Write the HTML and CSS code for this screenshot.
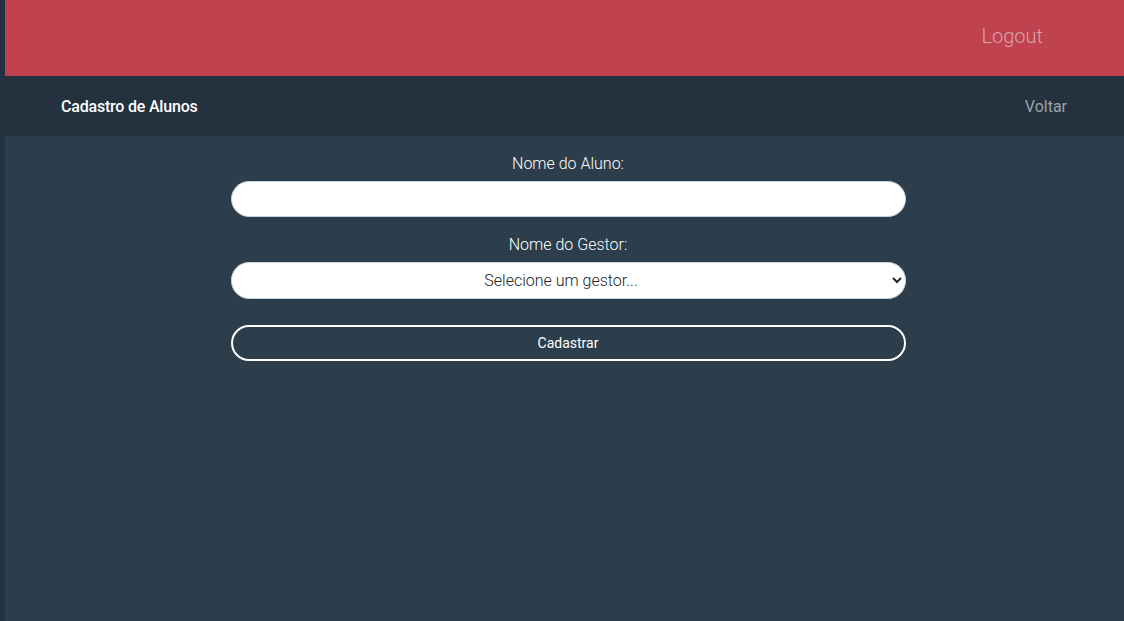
FILE: index.html
```html
<!DOCTYPE html>
<html lang="pt-BR">
<head>
<meta charset="utf-8">
<title>Cadastro de Alunos</title>
<link rel="stylesheet" href="styles.css">
</head>
<body>
<header class="topbar">
  <a class="logout" href="#">Logout</a>
</header>
<nav class="navbar">
  <span class="brand">Cadastro de Alunos</span>
  <a class="back" href="#">Voltar</a>
</nav>
<main class="content">
  <form class="form">
    <label class="label" for="aluno">Nome do Aluno:</label>
    <input class="field" id="aluno" type="text">
    <label class="label" for="gestor">Nome do Gestor:</label>
    <select class="field select" id="gestor">
      <option>Selecione um gestor...</option>
    </select>
    <button class="btn" type="button">Cadastrar</button>
  </form>
</main>
</body>
</html>
```
FILE: styles.css
```css
* { box-sizing: border-box; }
html, body { margin: 0; height: 100%; }
body {
  background: #24313e;
  font-family: Roboto, "Liberation Sans", sans-serif;
  display: flex;
  flex-direction: column;
  overflow: hidden;
}
.topbar {
  margin-left: 5px;
  height: 76px;
  background: #bf424e;
  display: flex;
  justify-content: flex-end;
  align-items: center;
  padding-right: 81px;
  padding-bottom: 4px;
}
.logout {
  color: #d7a4a9;
  font-size: 20px;
  font-weight: 300;
  text-decoration: none;
}
.navbar {
  height: 60px;
  background: #24313e;
  display: flex;
  justify-content: space-between;
  align-items: center;
  padding: 0 57px 0 61px;
}
.brand {
  color: #ffffff;
  font-size: 16px;
  font-weight: 500;
  letter-spacing: -0.2px;
}
.back {
  color: #9aa3ac;
  font-size: 16px;
  text-decoration: none;
}
.content {
  flex: 1;
  margin-left: 5px;
  background: #2c3d4b;
  display: flex;
  justify-content: center;
  padding: 16px 0 0 7px;
}
.form {
  width: 675px;
  display: flex;
  flex-direction: column;
  align-items: stretch;
}
.label {
  color: #ffffff;
  font-size: 16px;
  font-weight: 300;
  text-align: center;
  line-height: 24px;
  margin-bottom: 5px;
}
.field {
  height: 36px;
  border: 1px solid #c9d2d8;
  border-radius: 18px;
  background: #ffffff;
  font-family: Roboto, "Liberation Sans", sans-serif;
  font-size: 16px;
  font-weight: 300;
  color: #212529;
  margin-bottom: 16px;
  outline: none;
}
.select {
  height: 37px;
  text-align: center;
  text-align-last: center;
  padding: 0 6px 0 4px;
  margin-bottom: 26px;
}
.btn {
  height: 36px;
  border: 2px solid #ffffff;
  border-radius: 18px;
  background: transparent;
  color: #ffffff;
  font-family: Roboto, "Liberation Sans", sans-serif;
  font-size: 14px;
}
```
